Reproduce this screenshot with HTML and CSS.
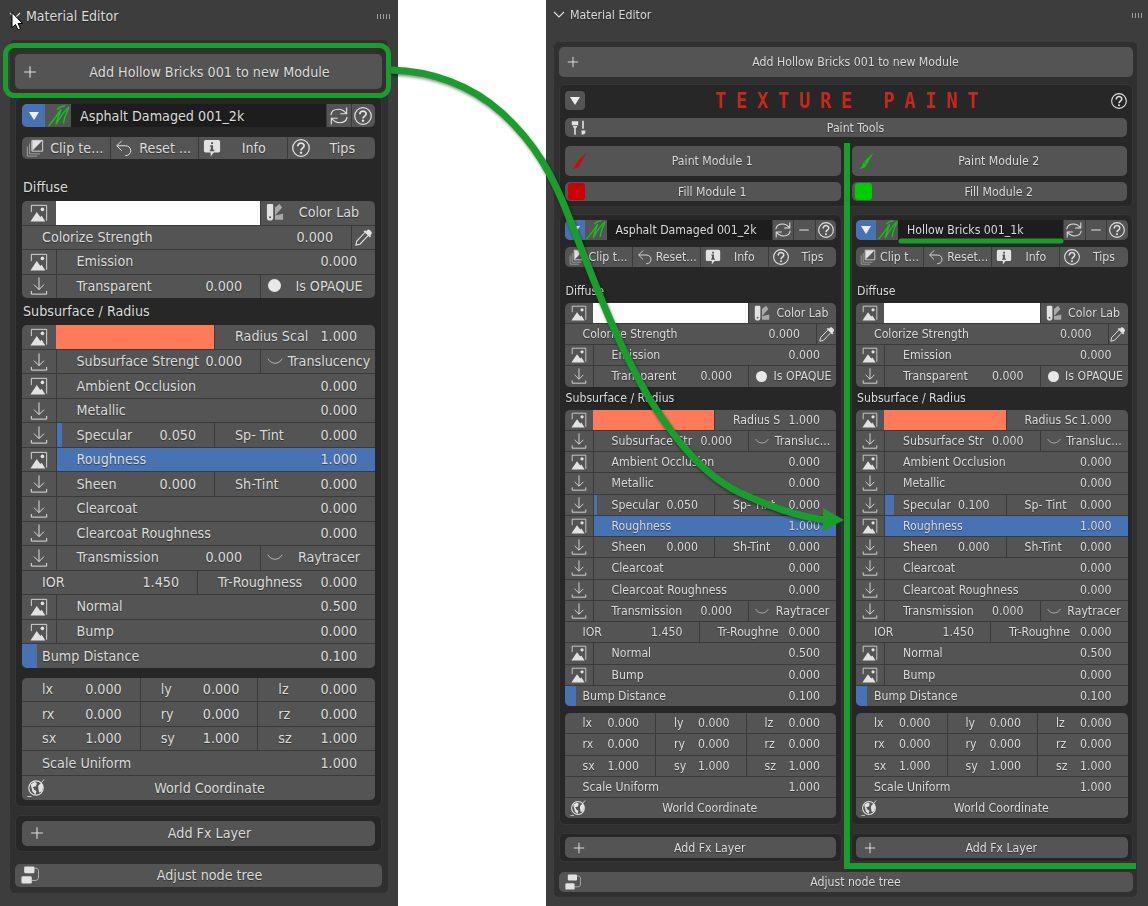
FILE: index.html

```html
<!DOCTYPE html>
<html lang="en">
<head>
  <meta charset="UTF-8">
  <title>Material Editor</title>
  <link rel="stylesheet" href="styles.css">
</head>
<body>
<svg class="defs" width="0" height="0">
  <symbol id="i-img" viewBox="0 0 20 20">
    <path d="M1.500 9V1.500h17v17" fill="none" stroke="currentColor" stroke-width="1"/>
    <path d="M.5 19.500L7.500 9L11.500 14.500L13 13L17 19.500z" fill="currentColor"/>
    <circle cx="13.800" cy="6" r="2" fill="currentColor"/>
  </symbol>
  <symbol id="i-down" viewBox="0 0 20 20">
    <path d="M10 .5v13.500M4.500 8.500l5.500 5.500 5.500-5.500M1.500 15.500v3.500h17v-3.500" fill="none" stroke="currentColor" stroke-width="1.100"/>
  </symbol>
  <symbol id="i-plus" viewBox="0 0 20 20">
    <path d="M10 3.500v13M3.500 10h13" fill="none" stroke="currentColor" stroke-width="1.200"/>
  </symbol>
  <symbol id="i-sync" viewBox="0 0 20 20">
    <path d="M1 9C1.500 4.500 5 2.500 9.500 2.500c3.500 0 6 1.500 8.500 4.500M19 11c-.5 4.500-4 6.500-8.500 6.500-3.500 0-6-1.500-8.500-4.500" fill="none" stroke="currentColor" stroke-width="1.300"/>
    <path d="M18.500 .5v7H11.500M1.500 19.500v-7H8.500" fill="none" stroke="currentColor" stroke-width="1.300"/>
  </symbol>
  <symbol id="i-help" viewBox="0 0 20 20">
    <circle cx="10" cy="10" r="9.200" fill="none" stroke="currentColor" stroke-width="1.400"/>
    <path d="M6.500 8c0-2.200 1.500-3.500 3.500-3.500S13.500 5.800 13.500 7.500c0 2.500-3.500 2.800-3.500 5.300" fill="none" stroke="currentColor" stroke-width="1.900"/>
    <circle cx="10" cy="15.300" r="1.300" fill="currentColor"/>
  </symbol>
  <symbol id="i-minus" viewBox="0 0 20 20">
    <path d="M4 10h12" stroke="currentColor" stroke-width="1.300"/>
  </symbol>
  <symbol id="i-clip" viewBox="0 0 20 20">
    <path d="M6.500 1.500h12v12h-12z" fill="#555" stroke="currentColor" stroke-width="1"/>
    <path d="M7 13L18 2H7z" fill="currentColor"/>
    <path d="M4 5v11.500h11.500M1.500 8v11h11" fill="none" stroke="currentColor" stroke-width="1" opacity=".6"/>
  </symbol>
  <symbol id="i-undo" viewBox="0 0 20 20">
    <path d="M7.500 2L2 7.500 7.500 13M2 7.500h9.500c3.500 0 6 2.300 6 5.500s-2.500 5.500-6 5.500" fill="none" stroke="currentColor" stroke-width="1.100"/>
  </symbol>
  <symbol id="i-info" viewBox="0 0 20 20">
    <path d="M3 1h14a2 2 0 0 1 2 2v10a2 2 0 0 1-2 2h-5l-3.500 4.500V15H3a2 2 0 0 1-2-2V3a2 2 0 0 1 2-2z" fill="currentColor"/>
    <path d="M9 3.500h2.200v2H9zM8 7h3.200v5H12.500v1.500h-5V12h1.200V8.500H8z" fill="#555"/>
  </symbol>
  <symbol id="i-lab" viewBox="0 0 20 20">
    <path d="M1 2.500a1.500 1.500 0 0 1 1.500-1.500h4A1.500 1.500 0 0 1 8 2.500V16a3.500 3.500 0 0 1-7 0z" fill="currentColor"/>
    <path d="M10 5l5-4 3 4-8 9zM10 18.500V14l9-2v6.500z" fill="currentColor" opacity=".6"/>
    <circle cx="4.500" cy="15.800" r="1.200" fill="#555"/>
  </symbol>
  <symbol id="i-drop" viewBox="0 0 20 20">
    <path d="M11 5L2 14.500 1 19l4.500-1 9-9.500" fill="none" stroke="currentColor" stroke-width="1.200"/>
    <path d="M9.500 3.500l7 7 1.500-1.500-1-1 1.500-1.500c1.500-1.500-3-6-4.500-4.500l-1.500 1.500-1-1z" fill="currentColor"/>
  </symbol>
  <symbol id="i-arc" viewBox="0 0 20 20">
    <path d="M2 7.500c2 3.300 4.800 5 8 5s6-1.700 8-5" fill="none" stroke="currentColor" stroke-width="1" opacity=".75"/>
  </symbol>
  <symbol id="i-globe" viewBox="0 0 20 20">
    <circle cx="10" cy="10" r="8" fill="none" stroke="currentColor" stroke-width="1.300"/>
    <path d="M4 6l4.500-3 2.500 1.500-1 3.500-3.500 1 1.500 3 2.500 1.500-1 4-3.500-3.500zM12.500 7.500l3.500-3.500 2 4.500-1.500 5.500-3 1-1-4.500z" fill="currentColor"/>
    <path d="M19 .5L16 4M.5 19.500H5" fill="none" stroke="currentColor" stroke-width="1"/>
  </symbol>
  <symbol id="i-nodes" viewBox="0 0 20 20">
    <rect x="3.500" y=".5" width="11.500" height="7.500" rx="1.500" fill="currentColor"/>
    <rect x=".5" y="11.500" width="11.500" height="8" rx="1.500" fill="currentColor"/>
    <path d="M15 2.500h1.500c3 0 3 2.500 3 7s-.5 6.500-3.500 6.500h-4" fill="none" stroke="currentColor" stroke-width="1" opacity=".75"/>
  </symbol>
  <symbol id="i-tools" viewBox="0 0 20 20">
    <path d="M1 1.500h8v5H1zM2.500 7.500h5v2h-1.500v9H4v-9H2.500z" fill="currentColor"/>
    <path d="M14 1h2v10h-2zM13 13h5v2c0 2-1.500 3.500-5 3.500 1-1 0-3 0-5.500z" fill="currentColor"/>
  </symbol>
  <symbol id="i-brush" viewBox="0 0 20 20">
    <path d="M19 0L7.500 11l4 3z" fill="currentColor"/>
    <path d="M7 11.500l4.500 3c-1.500 3.500-5 5.500-11 5.500 4-1.500 5-4.500 6.500-8.500z" fill="currentColor"/>
  </symbol>
  <symbol id="i-m" viewBox="0 0 24 24">
    <path d="M1.500 22C6 17 11 10 14 5.500 12 11 9.500 17 9 20.500 12 15 17 7 22 3 19.500 8.500 17 14 16.500 19.500M10 5.500C12 3.500 16 2 18 2" fill="none" stroke="currentColor" stroke-width="1.500"/>
  </symbol>
</svg>

<div class="page">

  <div class="panel panel-left">
    <header class="panel-head">
      <svg class="chevron" viewBox="0 0 12 8"><path d="M1 1l5 5 5-5" fill="none" stroke="currentColor" stroke-width="1.200"/></svg>
      <span class="panel-title">Material Editor</span>
      <span class="grip"></span>
    </header>
    <div class="panel-body">
      <div class="btn btn-add"><svg class="ico"><use href="#i-plus"/></svg><span class="btn-text">Add Hollow Bricks 001 to new Module</span></div>

      <section class="module">
        <div class="mod-head">
          <span class="mh-drop"><i class="tri"></i></span>
          <span class="mh-logo"><svg class="ico"><use href="#i-m"/></svg></span>
          <span class="mh-name">Asphalt Damaged 001_2k</span>
          <span class="mh-btn"><svg class="ico"><use href="#i-sync"/></svg></span>
          <span class="mh-btn"><svg class="ico"><use href="#i-help"/></svg></span>
        </div>
        <div class="toolbar">
          <span class="tool"><svg class="ico"><use href="#i-clip"/></svg><span class="tool-text">Clip te...</span></span>
          <span class="tool"><svg class="ico"><use href="#i-undo"/></svg><span class="tool-text">Reset ...</span></span>
          <span class="tool"><svg class="ico"><use href="#i-info"/></svg><span class="tool-text">Info</span></span>
          <span class="tool"><svg class="ico"><use href="#i-help"/></svg><span class="tool-text">Tips</span></span>
        </div>

        <div class="sect sect-first">Diffuse</div>
        <div class="group">
          <div class="row"><span class="ic"><svg class="ico"><use href="#i-img"/></svg></span><span class="swatch swatch-white"></span><span class="cell-btn w-rest"><svg class="ico"><use href="#i-lab"/></svg><span class="btn-text">Color Lab</span></span></div>
          <div class="row"><span class="cell grow"><span>Colorize Strength</span><span>0.000</span></span><span class="ic ic-right"><svg class="ico"><use href="#i-drop"/></svg></span></div>
          <div class="row"><span class="ic"><svg class="ico"><use href="#i-img"/></svg></span><span class="cell grow"><span>Emission</span><span>0.000</span></span></div>
          <div class="row"><span class="ic"><svg class="ico"><use href="#i-down"/></svg></span><span class="cell grow"><span>Transparent</span><span>0.000</span></span><span class="cell-btn w-rest"><i class="dot"></i><span class="btn-text">Is OPAQUE</span></span></div>
        </div>

        <div class="sect">Subsurface / Radius</div>
        <div class="group">
          <div class="row"><span class="ic"><svg class="ico"><use href="#i-img"/></svg></span><span class="swatch swatch-coral"></span><span class="cell w-half"><span>Radius Scal</span><span>1.000</span></span></div>
          <div class="row"><span class="ic"><svg class="ico"><use href="#i-down"/></svg></span><span class="cell grow"><span>Subsurface Strengt</span><span>0.000</span></span><span class="cell-btn w-rest"><svg class="ico"><use href="#i-arc"/></svg><span class="btn-text">Translucency</span></span></div>
          <div class="row"><span class="ic"><svg class="ico"><use href="#i-img"/></svg></span><span class="cell grow"><span>Ambient Occlusion</span><span>0.000</span></span></div>
          <div class="row"><span class="ic"><svg class="ico"><use href="#i-down"/></svg></span><span class="cell grow"><span>Metallic</span><span>0.000</span></span></div>
          <div class="row"><span class="ic"><svg class="ico"><use href="#i-down"/></svg></span><span class="cell grow slider"><i class="fill" style="width:3.8%"></i><span>Specular</span><span>0.050</span></span><span class="cell w-half"><span>Sp- Tint</span><span>0.000</span></span></div>
          <div class="row"><span class="ic"><svg class="ico"><use href="#i-img"/></svg></span><span class="cell grow slider"><i class="fill" style="width:100%"></i><span>Roughness</span><span>1.000</span></span></div>
          <div class="row"><span class="ic"><svg class="ico"><use href="#i-down"/></svg></span><span class="cell grow"><span>Sheen</span><span>0.000</span></span><span class="cell w-half"><span>Sh-Tint</span><span>0.000</span></span></div>
          <div class="row"><span class="ic"><svg class="ico"><use href="#i-down"/></svg></span><span class="cell grow"><span>Clearcoat</span><span>0.000</span></span></div>
          <div class="row"><span class="ic"><svg class="ico"><use href="#i-down"/></svg></span><span class="cell grow"><span>Clearcoat Roughness</span><span>0.000</span></span></div>
          <div class="row"><span class="ic"><svg class="ico"><use href="#i-down"/></svg></span><span class="cell grow"><span>Transmission</span><span>0.000</span></span><span class="cell-btn w-rest"><svg class="ico"><use href="#i-arc"/></svg><span class="btn-text">Raytracer</span></span></div>
          <div class="row"><span class="cell w-ior"><span>IOR</span><span>1.450</span></span><span class="cell grow"><span>Tr-Roughness</span><span>0.000</span></span></div>
          <div class="row"><span class="ic"><svg class="ico"><use href="#i-img"/></svg></span><span class="cell grow"><span>Normal</span><span>0.500</span></span></div>
          <div class="row"><span class="ic"><svg class="ico"><use href="#i-img"/></svg></span><span class="cell grow"><span>Bump</span><span>0.000</span></span></div>
          <div class="row"><span class="cell grow slider"><i class="fill" style="width:4.2%"></i><span>Bump Distance</span><span>0.100</span></span></div>
        </div>

        <div class="group group-xform">
          <div class="row"><span class="cell third"><span>lx</span><span>0.000</span></span><span class="cell third"><span>ly</span><span>0.000</span></span><span class="cell third"><span>lz</span><span>0.000</span></span></div>
          <div class="row"><span class="cell third"><span>rx</span><span>0.000</span></span><span class="cell third"><span>ry</span><span>0.000</span></span><span class="cell third"><span>rz</span><span>0.000</span></span></div>
          <div class="row"><span class="cell third"><span>sx</span><span>1.000</span></span><span class="cell third"><span>sy</span><span>1.000</span></span><span class="cell third"><span>sz</span><span>1.000</span></span></div>
          <div class="row"><span class="cell grow"><span>Scale Uniform</span><span>1.000</span></span></div>
          <div class="row row-btn"><svg class="ico"><use href="#i-globe"/></svg><span class="btn-text">World Coordinate</span></div>
        </div>
      </section>

      <section class="fx-box">
        <div class="btn btn-fx"><svg class="ico"><use href="#i-plus"/></svg><span class="btn-text">Add Fx Layer</span></div>
      </section>
      <div class="btn btn-node"><svg class="ico"><use href="#i-nodes"/></svg><span class="btn-text">Adjust node tree</span></div>
    </div>
  </div>

  <div class="panel panel-right">
    <header class="panel-head">
      <svg class="chevron" viewBox="0 0 12 8"><path d="M1 1l5 5 5-5" fill="none" stroke="currentColor" stroke-width="1.200"/></svg>
      <span class="panel-title">Material Editor</span>
      <span class="grip"></span>
    </header>
    <div class="panel-body">
      <div class="btn btn-add"><svg class="ico"><use href="#i-plus"/></svg><span class="btn-text">Add Hollow Bricks 001 to new Module</span></div>

      <section class="paint-box">
        <div class="paint-head">
          <span class="paint-drop"><i class="tri"></i></span>
          <span class="paint-title"><span>TEXTURE PAINT</span></span>
          <svg class="ico"><use href="#i-help"/></svg>
        </div>
        <div class="btn btn-tools"><svg class="ico"><use href="#i-tools"/></svg><span class="btn-text">Paint Tools</span></div>
        <div class="paint-cols">
          <div class="btn btn-paint"><svg class="ico ico-red"><use href="#i-brush"/></svg><span class="btn-text">Paint Module 1</span></div>
          <div class="btn btn-paint"><svg class="ico ico-green"><use href="#i-brush"/></svg><span class="btn-text">Paint Module 2</span></div>
          <div class="btn btn-fill"><i class="chip chip-red"></i><span class="btn-text">Fill Module 1</span></div>
          <div class="btn btn-fill"><i class="chip chip-green"></i><span class="btn-text">Fill Module 2</span></div>
        </div>
      </section>

      <div class="module-cols">
        <div class="module-col">
          <section class="module">
            <div class="mod-head">
              <span class="mh-drop"><i class="tri"></i></span>
              <span class="mh-logo"><svg class="ico"><use href="#i-m"/></svg></span>
              <span class="mh-name">Asphalt Damaged 001_2k</span>
              <span class="mh-btn"><svg class="ico"><use href="#i-sync"/></svg></span>
              <span class="mh-btn"><svg class="ico"><use href="#i-minus"/></svg></span>
              <span class="mh-btn"><svg class="ico"><use href="#i-help"/></svg></span>
            </div>
            <div class="toolbar">
              <span class="tool"><svg class="ico"><use href="#i-clip"/></svg><span class="tool-text">Clip t...</span></span>
              <span class="tool"><svg class="ico"><use href="#i-undo"/></svg><span class="tool-text">Reset...</span></span>
              <span class="tool"><svg class="ico"><use href="#i-info"/></svg><span class="tool-text">Info</span></span>
              <span class="tool"><svg class="ico"><use href="#i-help"/></svg><span class="tool-text">Tips</span></span>
            </div>

            <div class="sect sect-first">Diffuse</div>
            <div class="group">
              <div class="row"><span class="ic"><svg class="ico"><use href="#i-img"/></svg></span><span class="swatch swatch-white"></span><span class="cell-btn w-rest"><svg class="ico"><use href="#i-lab"/></svg><span class="btn-text">Color Lab</span></span></div>
              <div class="row"><span class="cell grow"><span>Colorize Strength</span><span>0.000</span></span><span class="ic ic-right"><svg class="ico"><use href="#i-drop"/></svg></span></div>
              <div class="row"><span class="ic"><svg class="ico"><use href="#i-img"/></svg></span><span class="cell grow"><span>Emission</span><span>0.000</span></span></div>
              <div class="row"><span class="ic"><svg class="ico"><use href="#i-down"/></svg></span><span class="cell grow"><span>Transparent</span><span>0.000</span></span><span class="cell-btn w-rest"><i class="dot"></i><span class="btn-text">Is OPAQUE</span></span></div>
            </div>

            <div class="sect">Subsurface / Radius</div>
            <div class="group">
              <div class="row"><span class="ic"><svg class="ico"><use href="#i-img"/></svg></span><span class="swatch swatch-coral"></span><span class="cell w-half"><span>Radius S</span><span>1.000</span></span></div>
              <div class="row"><span class="ic"><svg class="ico"><use href="#i-down"/></svg></span><span class="cell grow"><span>Subsurface Str</span><span>0.000</span></span><span class="cell-btn w-rest"><svg class="ico"><use href="#i-arc"/></svg><span class="btn-text">Transluc...</span></span></div>
              <div class="row"><span class="ic"><svg class="ico"><use href="#i-img"/></svg></span><span class="cell grow"><span>Ambient Occlusion</span><span>0.000</span></span></div>
              <div class="row"><span class="ic"><svg class="ico"><use href="#i-down"/></svg></span><span class="cell grow"><span>Metallic</span><span>0.000</span></span></div>
              <div class="row"><span class="ic"><svg class="ico"><use href="#i-down"/></svg></span><span class="cell grow slider"><i class="fill" style="width:3%"></i><span>Specular</span><span>0.050</span></span><span class="cell w-half"><span>Sp- Tint</span><span>0.000</span></span></div>
              <div class="row"><span class="ic"><svg class="ico"><use href="#i-img"/></svg></span><span class="cell grow slider"><i class="fill" style="width:100%"></i><span>Roughness</span><span>1.000</span></span></div>
              <div class="row"><span class="ic"><svg class="ico"><use href="#i-down"/></svg></span><span class="cell grow"><span>Sheen</span><span>0.000</span></span><span class="cell w-half"><span>Sh-Tint</span><span>0.000</span></span></div>
              <div class="row"><span class="ic"><svg class="ico"><use href="#i-down"/></svg></span><span class="cell grow"><span>Clearcoat</span><span>0.000</span></span></div>
              <div class="row"><span class="ic"><svg class="ico"><use href="#i-down"/></svg></span><span class="cell grow"><span>Clearcoat Roughness</span><span>0.000</span></span></div>
              <div class="row"><span class="ic"><svg class="ico"><use href="#i-down"/></svg></span><span class="cell grow"><span>Transmission</span><span>0.000</span></span><span class="cell-btn w-rest"><svg class="ico"><use href="#i-arc"/></svg><span class="btn-text">Raytracer</span></span></div>
              <div class="row"><span class="cell w-ior"><span>IOR</span><span>1.450</span></span><span class="cell grow"><span>Tr-Roughne</span><span>0.000</span></span></div>
              <div class="row"><span class="ic"><svg class="ico"><use href="#i-img"/></svg></span><span class="cell grow"><span>Normal</span><span>0.500</span></span></div>
              <div class="row"><span class="ic"><svg class="ico"><use href="#i-img"/></svg></span><span class="cell grow"><span>Bump</span><span>0.000</span></span></div>
              <div class="row"><span class="cell grow slider"><i class="fill" style="width:4.2%"></i><span>Bump Distance</span><span>0.100</span></span></div>
            </div>

            <div class="group group-xform">
              <div class="row"><span class="cell third"><span>lx</span><span>0.000</span></span><span class="cell third"><span>ly</span><span>0.000</span></span><span class="cell third"><span>lz</span><span>0.000</span></span></div>
              <div class="row"><span class="cell third"><span>rx</span><span>0.000</span></span><span class="cell third"><span>ry</span><span>0.000</span></span><span class="cell third"><span>rz</span><span>0.000</span></span></div>
              <div class="row"><span class="cell third"><span>sx</span><span>1.000</span></span><span class="cell third"><span>sy</span><span>1.000</span></span><span class="cell third"><span>sz</span><span>1.000</span></span></div>
              <div class="row"><span class="cell grow"><span>Scale Uniform</span><span>1.000</span></span></div>
              <div class="row row-btn"><svg class="ico"><use href="#i-globe"/></svg><span class="btn-text">World Coordinate</span></div>
            </div>
          </section>
          <section class="fx-box">
            <div class="btn btn-fx"><svg class="ico"><use href="#i-plus"/></svg><span class="btn-text">Add Fx Layer</span></div>
          </section>
        </div>

        <div class="module-col">
          <section class="module">
            <div class="mod-head">
              <span class="mh-drop"><i class="tri"></i></span>
              <span class="mh-logo"><svg class="ico"><use href="#i-m"/></svg></span>
              <span class="mh-name">Hollow Bricks 001_1k</span>
              <span class="mh-btn"><svg class="ico"><use href="#i-sync"/></svg></span>
              <span class="mh-btn"><svg class="ico"><use href="#i-minus"/></svg></span>
              <span class="mh-btn"><svg class="ico"><use href="#i-help"/></svg></span>
            </div>
            <div class="toolbar">
              <span class="tool"><svg class="ico"><use href="#i-clip"/></svg><span class="tool-text">Clip t...</span></span>
              <span class="tool"><svg class="ico"><use href="#i-undo"/></svg><span class="tool-text">Reset...</span></span>
              <span class="tool"><svg class="ico"><use href="#i-info"/></svg><span class="tool-text">Info</span></span>
              <span class="tool"><svg class="ico"><use href="#i-help"/></svg><span class="tool-text">Tips</span></span>
            </div>

            <div class="sect sect-first">Diffuse</div>
            <div class="group">
              <div class="row"><span class="ic"><svg class="ico"><use href="#i-img"/></svg></span><span class="swatch swatch-white"></span><span class="cell-btn w-rest"><svg class="ico"><use href="#i-lab"/></svg><span class="btn-text">Color Lab</span></span></div>
              <div class="row"><span class="cell grow"><span>Colorize Strength</span><span>0.000</span></span><span class="ic ic-right"><svg class="ico"><use href="#i-drop"/></svg></span></div>
              <div class="row"><span class="ic"><svg class="ico"><use href="#i-img"/></svg></span><span class="cell grow"><span>Emission</span><span>0.000</span></span></div>
              <div class="row"><span class="ic"><svg class="ico"><use href="#i-down"/></svg></span><span class="cell grow"><span>Transparent</span><span>0.000</span></span><span class="cell-btn w-rest"><i class="dot"></i><span class="btn-text">Is OPAQUE</span></span></div>
            </div>

            <div class="sect">Subsurface / Radius</div>
            <div class="group">
              <div class="row"><span class="ic"><svg class="ico"><use href="#i-img"/></svg></span><span class="swatch swatch-coral"></span><span class="cell w-half"><span>Radius Sc</span><span>1.000</span></span></div>
              <div class="row"><span class="ic"><svg class="ico"><use href="#i-down"/></svg></span><span class="cell grow"><span>Subsurface Str</span><span>0.000</span></span><span class="cell-btn w-rest"><svg class="ico"><use href="#i-arc"/></svg><span class="btn-text">Transluc...</span></span></div>
              <div class="row"><span class="ic"><svg class="ico"><use href="#i-img"/></svg></span><span class="cell grow"><span>Ambient Occlusion</span><span>0.000</span></span></div>
              <div class="row"><span class="ic"><svg class="ico"><use href="#i-down"/></svg></span><span class="cell grow"><span>Metallic</span><span>0.000</span></span></div>
              <div class="row"><span class="ic"><svg class="ico"><use href="#i-down"/></svg></span><span class="cell grow slider"><i class="fill" style="width:7.4%"></i><span>Specular</span><span>0.100</span></span><span class="cell w-half"><span>Sp- Tint</span><span>0.000</span></span></div>
              <div class="row"><span class="ic"><svg class="ico"><use href="#i-img"/></svg></span><span class="cell grow slider"><i class="fill" style="width:100%"></i><span>Roughness</span><span>1.000</span></span></div>
              <div class="row"><span class="ic"><svg class="ico"><use href="#i-down"/></svg></span><span class="cell grow"><span>Sheen</span><span>0.000</span></span><span class="cell w-half"><span>Sh-Tint</span><span>0.000</span></span></div>
              <div class="row"><span class="ic"><svg class="ico"><use href="#i-down"/></svg></span><span class="cell grow"><span>Clearcoat</span><span>0.000</span></span></div>
              <div class="row"><span class="ic"><svg class="ico"><use href="#i-down"/></svg></span><span class="cell grow"><span>Clearcoat Roughness</span><span>0.000</span></span></div>
              <div class="row"><span class="ic"><svg class="ico"><use href="#i-down"/></svg></span><span class="cell grow"><span>Transmission</span><span>0.000</span></span><span class="cell-btn w-rest"><svg class="ico"><use href="#i-arc"/></svg><span class="btn-text">Raytracer</span></span></div>
              <div class="row"><span class="cell w-ior"><span>IOR</span><span>1.450</span></span><span class="cell grow"><span>Tr-Roughne</span><span>0.000</span></span></div>
              <div class="row"><span class="ic"><svg class="ico"><use href="#i-img"/></svg></span><span class="cell grow"><span>Normal</span><span>0.500</span></span></div>
              <div class="row"><span class="ic"><svg class="ico"><use href="#i-img"/></svg></span><span class="cell grow"><span>Bump</span><span>0.000</span></span></div>
              <div class="row"><span class="cell grow slider"><i class="fill" style="width:4.2%"></i><span>Bump Distance</span><span>0.100</span></span></div>
            </div>

            <div class="group group-xform">
              <div class="row"><span class="cell third"><span>lx</span><span>0.000</span></span><span class="cell third"><span>ly</span><span>0.000</span></span><span class="cell third"><span>lz</span><span>0.000</span></span></div>
              <div class="row"><span class="cell third"><span>rx</span><span>0.000</span></span><span class="cell third"><span>ry</span><span>0.000</span></span><span class="cell third"><span>rz</span><span>0.000</span></span></div>
              <div class="row"><span class="cell third"><span>sx</span><span>1.000</span></span><span class="cell third"><span>sy</span><span>1.000</span></span><span class="cell third"><span>sz</span><span>1.000</span></span></div>
              <div class="row"><span class="cell grow"><span>Scale Uniform</span><span>1.000</span></span></div>
              <div class="row row-btn"><svg class="ico"><use href="#i-globe"/></svg><span class="btn-text">World Coordinate</span></div>
            </div>
          </section>
          <section class="fx-box">
            <div class="btn btn-fx"><svg class="ico"><use href="#i-plus"/></svg><span class="btn-text">Add Fx Layer</span></div>
          </section>
        </div>
      </div>

      <div class="btn btn-node"><svg class="ico"><use href="#i-nodes"/></svg><span class="btn-text">Adjust node tree</span></div>
    </div>
  </div>

  <!-- green annotations drawn over the two screenshots -->
  <svg class="annot" viewBox="0 0 1148 906">
    <g class="annot-lines">
      <rect x="5.500" y="45.500" width="383" height="50" rx="9"/>
      <path class="curve" d="M391 70C430 71 470 84 502 113C535 143 553 175 570 220C590 270 615 340 649 398C675 440 705 478 745 495C770 506 795 516 826 520"/>
      <path d="M847 143V866H1136"/>
      <path class="thin" d="M901 241H1061"/>
    </g>
    <path class="annot-head" d="M823 508L844 520L823 531z"/>
    <path class="cursor" d="M12 12.500V27.500L15.500 24.500L18 30L20.500 28.800L18 23.500H22.500z"/>
  </svg>
</div>
</body>
</html>
```

FILE: styles.css

```css
* {
  box-sizing: border-box;
}
html, body {
  margin: 0;
  background: #fff;
}
.defs {
  position: absolute;
}
.page {
  position: relative;
  width: 1148px;
  height: 906px;
  overflow: hidden;
  display: flex;
  justify-content: space-between;
  font-family: "DejaVu Sans", sans-serif;
  font-stretch: condensed;
  color: #dcdcdc;
  text-shadow: 0 1px 1px rgba(0, 0, 0, .45);
  white-space: nowrap;
}

/* sizes differ only because the right shot is scaled down */
.panel {
  height: 906px;
  background: #3d3d3d;
}
.panel-left {
  width: 398px;
  font-size: 14.2px;
  --row: 24.55px;
  --ico: 18px;
  --pl: 20px;
  --pr: 18px;
  --cell-bot: 1px;
  --head-h: 23px;
  --tool-h: 22px;
  --tool-gap: 10px;
  --sect-h: 22px;
  --sect-top: 17px;
  --sect-top2: 2px;
  --sect-bot: 3px;
  --mod-pad: 7px;
  --gap: 8px;
  --drop-w: 23px;
  --logo-w: 25px;
  --mh-btn: 24.5px;
  --ic-w: 33.5px;
  --rest: 115px;
  --half: 161px;
  --ior: 175px;
  --third: 33.3%;
  --text-off: 22px;
  padding: 0 10px;
}
.panel-right {
  width: 602px;
  font-size: 12.2px;
  --row: 21.25px;
  --ico: 16px;
  --pl: 18px;
  --pr: 16px;
  --cell-bot: 0;
  --head-h: 20px;
  --tool-h: 20px;
  --tool-gap: 7px;
  --sect-h: 18px;
  --sect-top: 15px;
  --sect-top2: 2px;
  --sect-bot: 3px;
  --mod-pad: 5.5px;
  --gap: 8px;
  --drop-w: 20px;
  --logo-w: 21px;
  --mh-btn: 21.5px;
  --ic-w: 28px;
  --rest: 88px;
  --half: 122px;
  --ior: 134px;
  --third: 33.3%;
  --text-off: 19px;
  padding: 0 11px 0 8px;
  filter: blur(.3px);
}

.panel-head {
  display: flex;
  align-items: center;
  height: 40px;
  padding: 0 0 8px 0;
}
.panel-right .panel-head {
  height: 42px;
  padding-bottom: 12px;
}
.chevron {
  width: 12px;
  height: 8px;
  margin: 0 5px 0 -1px;
  flex: none;
}
.panel-title {
  font-size: 14px;
}
.panel-right .panel-title {
  font-size: 12.3px;
}
.grip {
  margin-left: auto;
  margin-right: -2px;
  width: 14px;
  height: 5px;
  background: radial-gradient(circle, #aaa 0 .8px, transparent 1px) 0 0 / 3px 2.5px;
}
.panel-right .grip {
  margin-right: -6px;
  width: 12px;
}
.panel-body {
  background: #303030;
  border-radius: 5px;
  padding: 14px 6px 6px 5px;
}
.panel-right .panel-body {
  padding: 5px 4px 5px 5px;
}

.btn, .row-btn {
  position: relative;
  display: flex;
  align-items: center;
  justify-content: center;
  background: #545454;
  border-radius: 5px;
}
.btn > .ico, .row-btn > .ico {
  position: absolute;
  left: 6px;
  top: 50%;
  transform: translateY(-50%);
}
.row-btn > .ico {
  left: 5px;
}
.btn > .btn-text, .row-btn > .btn-text {
  padding-left: var(--text-off);
}
.ico {
  width: var(--ico);
  height: var(--ico);
  flex: none;
  color: #e2e2e2;
}
.btn-add {
  height: 35px;
  margin-bottom: 8px;
}
.panel-right .btn-add {
  height: 30px;
  margin-bottom: 7px;
}

.module {
  background: #272727;
  border: 1px solid #363636;
  border-radius: 6px;
  padding: calc(var(--mod-pad) - 1px);
  padding-bottom: 6px;
}
.mod-head {
  display: flex;
  height: var(--head-h);
  background: #545454;
  border-radius: 5px;
  overflow: hidden;
}
.mh-drop {
  width: var(--drop-w);
  background: #4772b3;
  display: flex;
  align-items: center;
  justify-content: center;
}
.tri {
  width: 0;
  height: 0;
  border: 5.5px solid transparent;
  border-bottom-width: 0;
  border-top: 8px solid #eee;
}
.mh-logo {
  width: var(--logo-w);
  margin-left: 1px;
  display: flex;
  align-items: center;
  justify-content: center;
}
.mh-logo .ico {
  color: #16c01c;
  width: calc(var(--ico) + 6px);
  height: calc(var(--ico) + 6px);
}
.mh-name {
  flex: 1;
  background: #1d1d1d;
  display: flex;
  align-items: center;
  padding-left: 9px;
  min-width: 0;
}
.mh-btn {
  width: var(--mh-btn);
  border-left: 1px solid #3a3a3a;
  display: flex;
  align-items: center;
  justify-content: center;
}
.toolbar {
  display: flex;
  height: var(--tool-h);
  margin-top: var(--tool-gap);
  background: #545454;
  border-radius: 5px;
  overflow: hidden;
}
.tool {
  flex: 1 1 0;
  display: flex;
  align-items: center;
  padding-left: 4px;
  min-width: 0;
  border-left: 1px solid #3a3a3a;
}
.tool:first-child {
  border-left: 0;
}
.tool-text {
  flex: 1;
  text-align: center;
  min-width: 0;
}

.sect {
  height: var(--sect-h);
  line-height: var(--sect-h);
  margin: var(--sect-top2) 0 var(--sect-bot) 1px;
}
.sect-first {
  margin-top: var(--sect-top);
}
.group {
  background: #545454;
  border-radius: 5px;
  overflow: hidden;
}
.group-xform {
  margin-top: 10px;
}
.panel-right .group-xform {
  margin-top: 7px;
}
.row {
  display: flex;
  height: var(--row);
  border-top: 1px solid #3a3a3a;
}
.row:first-child {
  height: calc(var(--row) - 1px);
  border-top: 0;
}
.ic {
  width: var(--ic-w);
  flex: none;
  display: flex;
  align-items: center;
  justify-content: center;
}
.ic-right {
  width: 24px;
  border-left: 1px solid #3a3a3a;
}
.panel-right .ic-right {
  width: 20px;
}
.cell {
  position: relative;
  display: flex;
  align-items: center;
  justify-content: space-between;
  padding: 0 var(--pr) var(--cell-bot) var(--pl);
  border-left: 1px solid #3a3a3a;
  min-width: 0;
}
.row > .cell:first-child {
  border-left: 0;
}
.cell > span {
  position: relative;
}
.grow {
  flex: 1;
}
.w-half {
  width: var(--half);
  flex: none;
}
.w-ior {
  width: var(--ior);
  flex: none;
}
.third {
  flex: 1 1 var(--third);
}
.slider .fill {
  position: absolute;
  left: 0;
  top: 0;
  bottom: 0;
  background: #4772b3;
}
.swatch {
  flex: 1;
}
.swatch-white {
  background: #fff;
}
.swatch-coral {
  background: #ff7a59;
}
.cell-btn {
  display: flex;
  align-items: center;
  padding: 0 0 var(--cell-bot) 5px;
  border-left: 1px solid #3a3a3a;
  flex: none;
}
.w-rest {
  width: var(--rest);
}
.cell-btn .btn-text {
  flex: 1;
  text-align: center;
  min-width: 0;
  margin-right: 1px;
}
.dot {
  width: 13px;
  height: 13px;
  margin: 0 3px 0 2px;
  flex: none;
  border-radius: 50%;
  background: #e8e8e8;
}
.panel-right .dot {
  width: 11px;
  height: 11px;
}
.row-btn {
  border-radius: 0;
}

.fx-box {
  margin-top: var(--gap);
  padding: 5px 6px;
  background: #272727;
  border: 1px solid #363636;
  border-radius: 6px;
}
.panel-right .fx-box {
  padding: 3px 4.5px;
}
.btn-fx {
  height: 25px;
}
.panel-right .btn-fx {
  height: 21px;
}
.btn-node {
  height: 23px;
  margin-top: 12px;
}
.panel-right .btn-node {
  height: 20px;
  margin-top: 10px;
}

.paint-box {
  background: #272727;
  border: 1px solid #363636;
  border-radius: 6px;
  padding: 6px 5px;
  height: 123px;
}
.paint-head {
  display: flex;
  align-items: center;
  height: 19px;
}
.paint-drop {
  width: 20px;
  height: 19px;
  background: #545454;
  border-radius: 4px;
  display: flex;
  align-items: center;
  justify-content: center;
}
.paint-title {
  flex: 1;
  text-align: center;
  padding-left: 8px;
  color: #c6281c;
  text-shadow: none;
  font: bold 22px "DejaVu Sans Mono", monospace;
}
.paint-title span {
  display: inline-block;
  letter-spacing: 11.5px;
  transform: scaleX(.85);
  transform-origin: center;
}
.btn-tools {
  height: 19px;
  margin-top: 8px;
}
.paint-cols {
  display: grid;
  grid-template-columns: 1fr 1fr;
  gap: 6px 11px;
  margin-top: 9px;
}
.btn-paint {
  height: 30px;
}
.btn-fill {
  height: 19px;
}
.ico-red {
  color: #cc0a0a;
}
.ico-green {
  color: #0fc40f;
}
.chip {
  position: absolute;
  left: 3px;
  top: 1px;
  bottom: 1px;
  width: 17px;
  border-radius: 3px;
}
.chip-red {
  background: #cc0000;
}
.chip-green {
  background: #00cc00;
}
.module-cols {
  display: grid;
  grid-template-columns: 1fr 1fr;
  gap: 9px;
  margin-top: 7px;
}

.annot {
  position: absolute;
  left: 0;
  top: 0;
  width: 1148px;
  height: 906px;
}
.annot-lines {
  fill: none;
  stroke: #1b9d2d;
  stroke-width: 6px;
}
.annot-lines rect {
  stroke-width: 5px;
}
.annot-lines .curve {
  stroke-width: 7px;
  filter: drop-shadow(1px 2px 1.5px rgba(0, 0, 0, .45));
}
.annot-lines .thin {
  stroke-width: 5px;
  stroke-linecap: round;
}
.annot-head {
  fill: #1b9d2d;
}
.cursor {
  fill: #fff;
  stroke: #000;
  stroke-width: 1px;
}
```
